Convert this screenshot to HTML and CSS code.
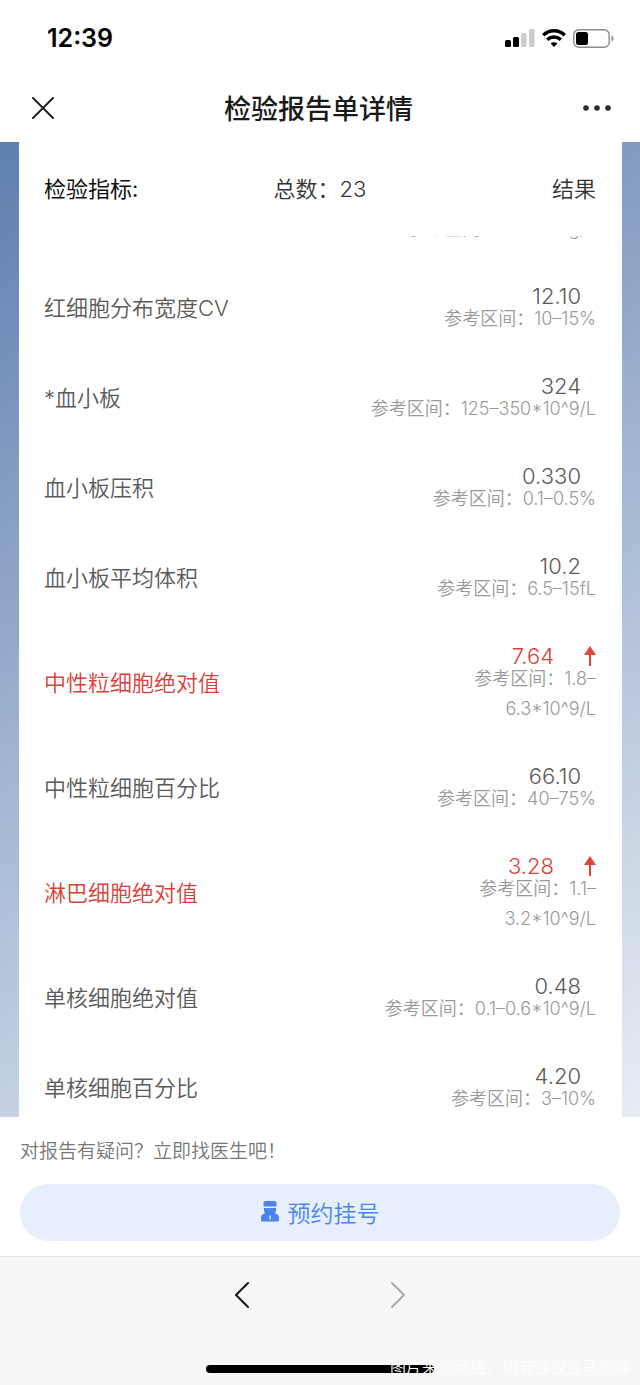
FILE: index.html
```html
<!DOCTYPE html>
<html lang="zh-CN">
<head>
    <meta charset="UTF-8">
    <meta name="viewport" content="width=device-width, initial-scale=1.0">
    <title>检验报告单详情</title>
    <link rel="stylesheet" href="styles.css">
</head>
<body>
    <div class="status-bar">
        <span class="time">12:39</span>
        <div class="status-icons">
            <svg width="30" height="18" viewBox="0 0 30 18">
                <rect x="0" y="11" width="6" height="7" rx="1.5" fill="#000"/>
                <rect x="8" y="8" width="6" height="10" rx="1.5" fill="#000"/>
                <rect x="16" y="4" width="5.5" height="14" rx="1.5" fill="#ccc"/>
                <rect x="24" y="0" width="5.5" height="18" rx="1.5" fill="#ccc"/>
            </svg>
            <svg width="24" height="18" viewBox="0 0 24 18" fill="none" stroke="#000" stroke-width="3.4">
                <path d="M1.200 6.200C7.400.3 16.600.3 22.800 6.200"/>
                <path d="M5.200 10.800c4-3.700 9.600-3.700 13.600 0"/>
                <path d="M8.600 14.500c2-1.700 4.800-1.700 6.800 0L12 17.900z" fill="#000" stroke="none"/>
            </svg>
            <svg width="42" height="19" viewBox="0 0 42 19">
                <rect x=".8" y=".8" width="35.4" height="17.4" rx="5" fill="none" stroke="#8c8c8c" stroke-width="1.4"/>
                <rect x="3" y="3" width="12" height="13" rx="2.5" fill="#000"/>
                <path d="M38.500 6.500c2.600.8 2.600 5.200 0 6z" fill="#8c8c8c"/>
            </svg>
        </div>
    </div>

    <header class="nav">
        <button type="button" class="icon-btn" aria-label="关闭">
            <svg width="22" height="22" viewBox="0 0 22 22" fill="none" stroke="#222" stroke-width="2" stroke-linecap="round">
                <path d="M1 1l20 20M21 1L1 21"/>
            </svg>
        </button>
        <h1>检验报告单详情</h1>
        <button type="button" class="icon-btn" aria-label="更多">
            <svg width="28" height="22" viewBox="0 0 28 22" fill="#2b2b2b">
                <circle cx="3" cy="11" r="2.8"/>
                <circle cx="14" cy="11" r="2.8"/>
                <circle cx="25" cy="11" r="2.8"/>
            </svg>
        </button>
    </header>

    <main class="report">
        <div class="panel">
            <div class="panel-head">
                <span class="head-name">检验指标:</span>
                <span class="head-total">总数：23</span>
                <span class="head-result">结果</span>
            </div>
            <div class="panel-body">
                <table class="items">
                    <tbody>
                        <tr>
                            <th scope="row"></th>
                            <td><div class="value"></div><div class="range">参考区间：316–354g/L</div></td>
                        </tr>
                        <tr>
                            <th scope="row">红细胞分布宽度CV</th>
                            <td><div class="value">12.10</div><div class="range">参考区间：10–15%</div></td>
                        </tr>
                        <tr>
                            <th scope="row">*血小板</th>
                            <td><div class="value">324</div><div class="range">参考区间：125–350*10^9/L</div></td>
                        </tr>
                        <tr>
                            <th scope="row">血小板压积</th>
                            <td><div class="value">0.330</div><div class="range">参考区间：0.1–0.5%</div></td>
                        </tr>
                        <tr>
                            <th scope="row">血小板平均体积</th>
                            <td><div class="value">10.2</div><div class="range">参考区间：6.5–15fL</div></td>
                        </tr>
                        <tr class="high">
                            <th scope="row">中性粒细胞绝对值</th>
                            <td>
                                <div class="value">7.64
                                    <svg class="arrow" width="12" height="20" viewBox="0 0 12 20"><path d="M6 0l6 9H7v11H5V9H0z"/></svg>
                                </div>
                                <div class="range">参考区间：1.8–<br>6.3*10^9/L</div>
                            </td>
                        </tr>
                        <tr>
                            <th scope="row">中性粒细胞百分比</th>
                            <td><div class="value">66.10</div><div class="range">参考区间：40–75%</div></td>
                        </tr>
                        <tr class="high">
                            <th scope="row">淋巴细胞绝对值</th>
                            <td>
                                <div class="value">3.28
                                    <svg class="arrow" width="12" height="20" viewBox="0 0 12 20"><path d="M6 0l6 9H7v11H5V9H0z"/></svg>
                                </div>
                                <div class="range">参考区间：1.1–<br>3.2*10^9/L</div>
                            </td>
                        </tr>
                        <tr>
                            <th scope="row">单核细胞绝对值</th>
                            <td><div class="value">0.48</div><div class="range">参考区间：0.1–0.6*10^9/L</div></td>
                        </tr>
                        <tr>
                            <th scope="row">单核细胞百分比</th>
                            <td><div class="value">4.20</div><div class="range">参考区间：3–10%</div></td>
                        </tr>
                    </tbody>
                </table>
            </div>
        </div>
    </main>

    <section class="ask">
        <p>对报告有疑问？立即找医生吧！</p>
        <button type="button" class="book-btn">
            <svg width="18" height="21" viewBox="0 0 18 21" fill="#4c84ee">
                <path d="M4.500 0h9q2 0 2 2v3.500h-13V2q0-2 2-2z"/>
                <path d="M3 7h12v2q0 2-1 3.200l2.500 1.300q1.500 1 1.500 3V19q0 1.500-1.500 1.500h-15Q0 20.500 0 19v-2.500q0-2 1.500-3L4 12.200Q3 11 3 9z"/>
                <path d="M8.300 14.500h1.400v4H8.300z" fill="#e7effc"/>
            </svg>
            预约挂号
        </button>
    </section>

    <footer class="toolbar">
        <div class="toolbar-btns">
            <button type="button" class="icon-btn" aria-label="后退">
                <svg width="14" height="26" viewBox="0 0 14 26" fill="none" stroke="#111" stroke-width="2" stroke-linecap="round" stroke-linejoin="round">
                    <path d="M13 1L1 13l12 12"/>
                </svg>
            </button>
            <button type="button" class="icon-btn" aria-label="前进" disabled>
                <svg width="14" height="26" viewBox="0 0 14 26" fill="none" stroke="#aaa" stroke-width="2" stroke-linecap="round" stroke-linejoin="round">
                    <path d="M1 1l12 12L1 25"/>
                </svg>
            </button>
        </div>
        <div class="home-indicator"></div>
        <div class="watermark">图片来源网络，如有侵权立马删除</div>
    </footer>
</body>
</html>
```
FILE: styles.css
```css
* {
    box-sizing: border-box;
}
body {
    margin: 0;
    height: 100vh;
    display: flex;
    flex-direction: column;
    background: #fff;
    font-family: Inter, "Noto Sans CJK SC", sans-serif;
    font-weight: 350;
    color: #5a5a5a;
}
button {
    font-family: inherit;
    font-weight: inherit;
    border: none;
    cursor: pointer;
}
svg {
    display: block;
    flex: none;
}

/* status bar */
.status-bar {
    display: flex;
    justify-content: space-between;
    align-items: center;
    height: 76px;
    padding: 0 25px 0 47px;
}
.time {
    font-size: 25px;
    font-weight: 600;
    color: #000;
}
.status-icons {
    display: flex;
    align-items: center;
    gap: 7px;
}

/* title bar */
.nav {
    display: flex;
    justify-content: space-between;
    align-items: center;
    height: 66px;
    padding: 0 29px 2px 32px;
}
.nav h1 {
    margin: 0;
    padding-top: 4px;
    font-size: 27px;
    font-weight: 500;
    line-height: 40px;
    color: #1a1a1a;
}
.icon-btn {
    padding: 0;
    background: none;
}

/* report */
.report {
    flex: 1;
    min-height: 0;
    padding: 0 18px 0 19px;
    background: linear-gradient(153deg, #5f7faf, #e8edf5);
}
.panel {
    display: flex;
    flex-direction: column;
    height: 100%;
    background: #fff;
}
.panel-head {
    display: grid;
    grid-template-columns: 1fr auto 1fr;
    align-items: center;
    height: 94px;
    padding: 0 26px 4px 25px;
    font-size: 22px;
    color: #333;
}
.head-name {
    font-weight: 400;
    color: #111;
}
.head-result {
    text-align: right;
}
.panel-body {
    flex: 1;
    min-height: 0;
    overflow: hidden;
}
/* the list is scrolled part way through a row */
.items {
    width: 100%;
    margin-top: -63px;
    border-collapse: collapse;
}
.items th {
    padding: 0 0 5px 25px;
    font-size: 22px;
    font-weight: inherit;
    text-align: left;
}
.items td {
    padding: 25px 26px 19px 0;
    text-align: right;
}
.value {
    display: flex;
    justify-content: flex-end;
    align-items: center;
    height: 16px;
    padding-right: 15px;
    font-size: 22px;
    line-height: 16px;
}
.range {
    font-size: 18px;
    line-height: 30px;
    color: #999;
}
.high th,
.high .value {
    color: #d9403a;
}
.high .value {
    gap: 30px;
    padding-right: 0;
}
.arrow {
    fill: #e0453c;
}

/* bottom prompt */
.ask {
    padding: 21px 20px 15px;
}
.ask p {
    margin: 0 0 18px;
    font-size: 19px;
    line-height: 28px;
    color: #777;
}
.book-btn {
    display: flex;
    justify-content: center;
    align-items: center;
    gap: 9px;
    width: 100%;
    height: 57px;
    padding: 0 0 2px;
    border-radius: 29px;
    background: #e7effc;
    font-size: 23px;
    color: #4c84ee;
}

/* browser toolbar */
.toolbar {
    position: relative;
    height: 129px;
    border-top: 1px solid #e2e2e2;
    background: #f7f7f7;
}
.toolbar-btns {
    display: flex;
    justify-content: center;
    align-items: center;
    gap: 142px;
    height: 76px;
}
.home-indicator {
    width: 228px;
    height: 8px;
    margin: 32px auto 0;
    border-radius: 4px;
    background: #000;
}
.watermark {
    position: absolute;
    right: 10px;
    bottom: 6px;
    font-size: 16px;
    line-height: 24px;
    color: #fff;
}
```
